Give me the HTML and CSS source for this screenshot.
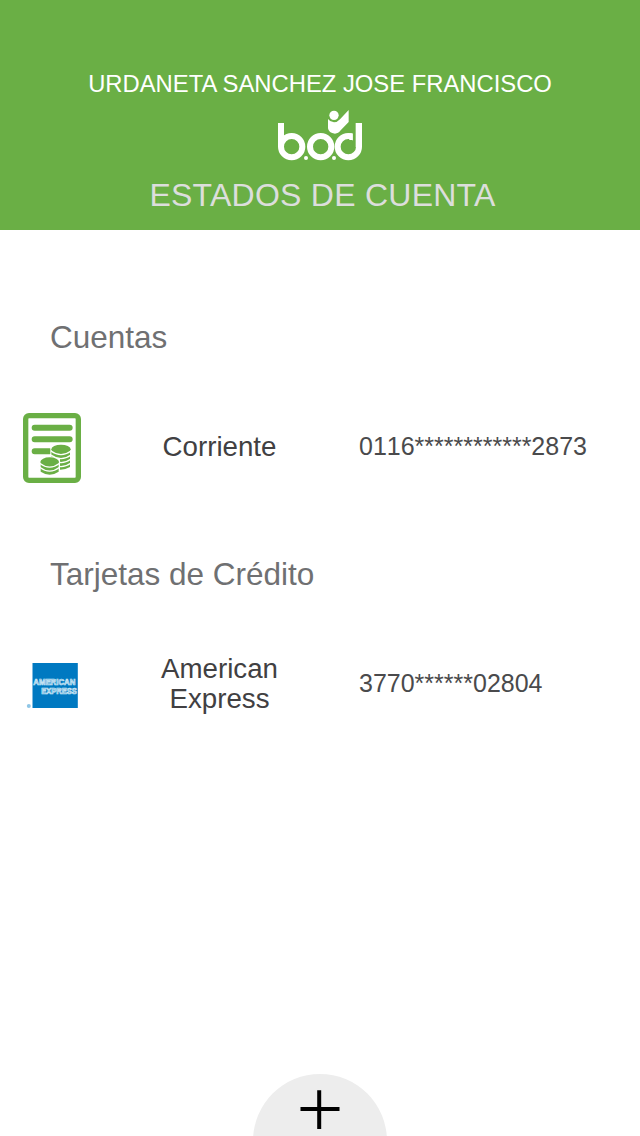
FILE: index.html
```html
<!DOCTYPE html>
<html lang="es">
<head>
<meta charset="utf-8">
<title>Estados de cuenta</title>
<link rel="stylesheet" href="styles.css">
</head>
<body>
<div class="screen">
  <header class="header">
    <div class="customer">URDANETA SANCHEZ JOSE FRANCISCO</div>
    <svg class="logo" viewBox="0 0 300 186" role="img" aria-label="b.o.d">
      <g class="logo-rings">
        <circle cx="65" cy="128" r="32"/>
        <circle cx="152" cy="128" r="32"/>
        <circle cx="235" cy="128" r="32"/>
      </g>
      <rect class="logo-gap" x="248" y="84" width="29" height="44"/>
      <g class="logo-solid">
        <rect x="24" y="57" width="18" height="72"/>
        <rect x="257" y="57" width="19" height="72"/>
        <rect x="238" y="88" width="10" height="20"/>
        <circle cx="108" cy="162" r="6"/>
        <circle cx="192" cy="162" r="6"/>
        <circle cx="192" cy="34" r="14"/>
        <path d="M174 45Q180 54 192 55Q202 55 210 46L236 18V54L212 79Q205 89 195 89Q176 87 174 73Z"/>
      </g>
    </svg>
    <h1 class="title">ESTADOS DE CUENTA</h1>
  </header>
  <main class="content">
    <section class="group">
      <h2 class="group-title">Cuentas</h2>
      <div class="row">
        <svg class="statement-icon" viewBox="0 0 174 210">
          <rect class="sheet" x="8" y="8" width="158" height="194" rx="10"/>
          <g class="sheet-lines"><path d="M35 44H140M35 79H140M35 115H80"/></g>
          <rect class="mask" x="82" y="96" width="64" height="80"/>
          <g class="coins">
            <path d="M85 162Q113 178 141 162V150H85Z M85 152Q113 168 141 152V113H85Z"/>
            <ellipse cx="114" cy="109" rx="29" ry="14"/>
          </g>
          <g class="grooves"><path d="M84 114Q114 136 144 114M84 126Q114 148 144 126M84 138Q114 160 144 138M84 150Q114 172 144 150"/></g>
          <path class="mask" d="M76 136H111V184H76Z"/>
          <ellipse class="mask" cx="80" cy="148" rx="32" ry="18"/>
          <g class="coins">
            <path d="M53 149H107V176Q80 194 53 176Z"/>
            <ellipse cx="80" cy="147" rx="28" ry="14"/>
          </g>
          <g class="grooves"><path d="M50 151Q80 174 110 151M50 163Q80 186 110 163"/></g>
        </svg>
        <div class="product">Corriente</div>
        <div class="number">0116************2873</div>
      </div>
    </section>
    <section class="group">
      <h2 class="group-title">Tarjetas de Crédito</h2>
      <div class="row">
        <svg class="amex-icon" viewBox="0 0 53 46">
          <rect class="amex-card" x="6.5" y="0" width="45.3" height="45"/>
          <circle class="amex-mark" cx="2.8" cy="43" r="2"/>
          <g class="amex-text">
            <text x="7.3" y="22.3" textLength="42" lengthAdjust="spacingAndGlyphs">AMERICAN</text>
            <text x="15.3" y="31.3" textLength="35.5" lengthAdjust="spacingAndGlyphs">EXPRESS</text>
          </g>
        </svg>
        <div class="product">American Express</div>
        <div class="number">3770******02804</div>
      </div>
    </section>
  </main>
  <footer class="footer">
    <button class="add" aria-label="Agregar">
      <svg class="plus" viewBox="0 0 40 40"><path d="M.5 19H39.5M19.2 .3V39"/></svg>
    </button>
  </footer>
</div>
</body>
</html>
```
FILE: styles.css
```css
* { box-sizing: border-box; }
body {
  margin: 0;
  background: #fff;
  font-family: "Liberation Sans", Arial, sans-serif;
}
.screen {
  display: flex;
  flex-direction: column;
  width: 640px;
  height: 1136px;
  overflow: hidden;
}
.header {
  display: flex;
  flex-direction: column;
  align-items: center;
  height: 230px;
  padding-top: 69px;
  background: #6aaf45;
}
.customer {
  color: #fff;
  font-size: 23.8px;
  line-height: 30px;
  white-space: nowrap;
}
.logo { width: 100px; height: 62px; margin-top: 5px; }
.logo-rings { fill: none; stroke: #fff; stroke-width: 18; }
.logo-gap { fill: #6aaf45; }
.logo-solid { fill: #fff; }
.title {
  margin: 9px 0 0;
  padding-left: 5px;
  color: #dcdedc;
  font-size: 32px;
  font-weight: 400;
  letter-spacing: .25px;
  line-height: 40px;
}
.content { flex: 1; padding-top: 87px; }
.group { height: 237px; }
.group-title {
  margin: 0 0 44px;
  padding-left: 50px;
  color: #6f7072;
  font-size: 31.5px;
  font-weight: 400;
  line-height: 40px;
}
.row {
  display: grid;
  grid-template-columns: 104px 231px 1fr;
  align-items: center;
  height: 91px;
}
.statement-icon { width: 58px; height: 70px; margin: 2px 0 0 23px; }
.sheet { fill: #fff; stroke: #6aaf45; stroke-width: 16; }
.sheet-lines { fill: none; stroke: #6aaf45; stroke-width: 18; stroke-linecap: round; }
.mask { fill: #fff; }
.coins { fill: #6aaf45; }
.grooves { fill: none; stroke: #fff; stroke-width: 3.5; }
.amex-icon {
  width: 53px;
  height: 46px;
  margin: 4px 0 0 26px;
  overflow: visible;
}
.amex-card { fill: #0079c1; }
.amex-mark { fill: #8fc6e6; }
.amex-text {
  fill: #4ba3d6;
  stroke: #d4eaf6;
  stroke-width: .7;
  font-size: 8.5px;
  font-weight: 700;
}
.product {
  justify-self: center;
  width: 150px;
  color: #414042;
  font-size: 27.7px;
  line-height: 30px;
  text-align: center;
}
.number {
  padding: 0 0 2px 24px;
  color: #4a4a4c;
  font-size: 25px;
  font-kerning: none;
  line-height: 30px;
  white-space: nowrap;
}
.footer {
  display: flex;
  justify-content: center;
  height: 62px;
}
.add {
  display: flex;
  justify-content: center;
  width: 134px;
  height: 134px;
  flex: none;
  padding: 16px 0 0;
  border: 0;
  border-radius: 50%;
  background: #ededed;
}
.plus {
  width: 40px;
  height: 40px;
  fill: none;
  stroke: #000;
  stroke-width: 4;
}
```
